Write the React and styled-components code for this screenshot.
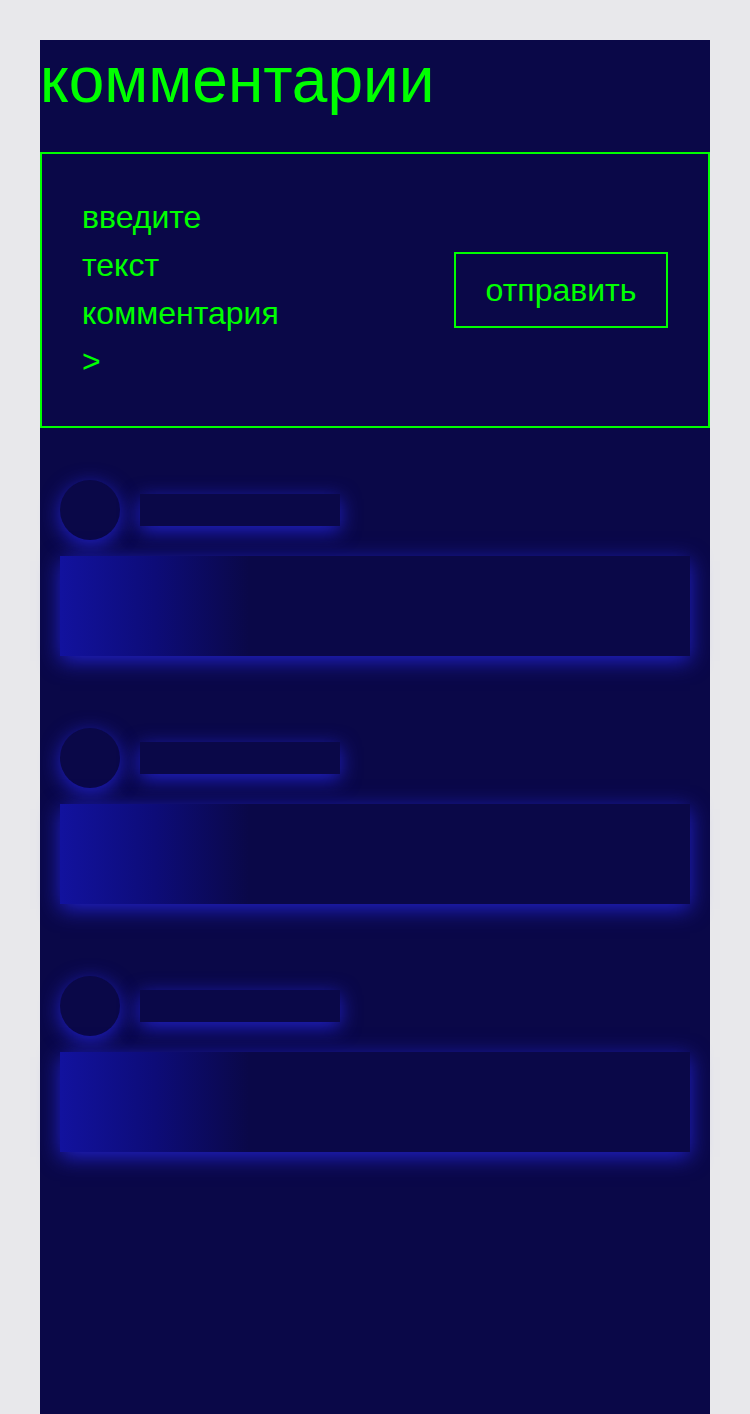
import React from "react";
import styled, { createGlobalStyle } from "styled-components";

const GlobalStyle = createGlobalStyle`
  body {
    margin: 0;
    background: #e8e8eb;
    font-family: "Liberation Sans", Arial, sans-serif;
  }
`;

const Page = styled.div`
  margin: 40px 40px 0;
  min-height: 1400px;
  background: #0a0848;
  color: #00ff00;
`;

const Title = styled.h1`
  margin: 0;
  padding-top: 4px;
  font-size: 64px;
  font-weight: normal;
  line-height: 72px;
  height: 108px;
`;

const CommentForm = styled.form`
  display: flex;
  align-items: center;
  justify-content: space-between;
  padding: 40px;
  border: 2px solid #00ff00;
`;

const CommentInput = styled.textarea`
  width: 200px;
  height: 192px;
  margin: -1px 0 1px;
  padding: 0;
  border: none;
  outline: none;
  resize: none;
  overflow: hidden;
  background: transparent;
  color: #00ff00;
  font-family: "Liberation Sans", Arial, sans-serif;
  font-size: 32px;
  line-height: 48px;

  &::placeholder {
    color: #00ff00;
    opacity: 1;
  }
`;

const SendButton = styled.button`
  height: 76px;
  width: 214px;
  padding: 0;
  border: 2px solid #00ff00;
  background: transparent;
  color: #00ff00;
  font-family: "Liberation Sans", Arial, sans-serif;
  font-size: 32px;
  cursor: pointer;
`;

const CommentList = styled.div`
  display: flex;
  flex-direction: column;
  gap: 72px;
  padding: 52px 20px;
`;

const Comment = styled.div`
  display: flex;
  flex-direction: column;
  gap: 16px;
`;

const CommentHead = styled.div`
  display: flex;
  align-items: center;
  gap: 20px;
`;

const glow = "0 5px 20px rgba(36, 36, 214, 0.9)";

const Avatar = styled.div`
  width: 60px;
  height: 60px;
  border-radius: 50%;
  background: #0a0848;
  box-shadow: ${glow};
`;

const NameLine = styled.div`
  width: 200px;
  height: 32px;
  background: #0a0848;
  box-shadow: ${glow};
`;

const TextBlock = styled.div`
  height: 100px;
  background: linear-gradient(90deg, #12129e 0%, #0d0c78 15%, #0a0848 30%);
  box-shadow: ${glow};
`;

const placeholders = [1, 2, 3];

export default function App() {
  return (
    <>
      <GlobalStyle />
      <Page>
        <Title>комментарии</Title>
        <CommentForm onSubmit={(e) => e.preventDefault()}>
          <CommentInput placeholder="введите текст комментария >" />
          <SendButton type="submit">отправить</SendButton>
        </CommentForm>
        <CommentList>
          {placeholders.map((id) => (
            <Comment key={id}>
              <CommentHead>
                <Avatar />
                <NameLine />
              </CommentHead>
              <TextBlock />
            </Comment>
          ))}
        </CommentList>
      </Page>
    </>
  );
}
